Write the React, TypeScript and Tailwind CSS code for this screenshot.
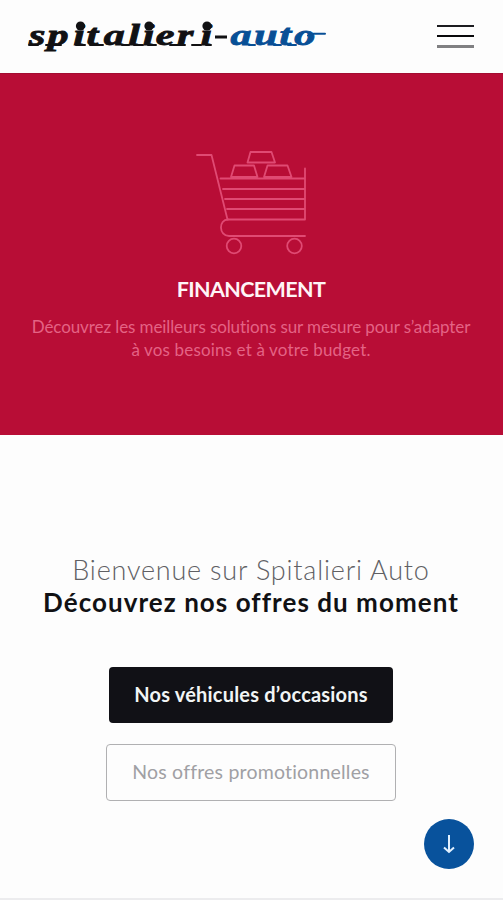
import React from "react";

function Logo() {
  return (
    <svg
      className="block h-[40px] w-[310px]"
      viewBox="18 17 310 40"
      role="img"
      aria-label="spitalieri-auto"
      fontFamily="'Liberation Serif', serif"
      fontSize="29"
      fontWeight="700"
      fontStyle="italic"
      strokeLinecap="round"
    >
      <g fill="#111113" stroke="#111113">
        <text
          transform="scale(1.45 1)"
          strokeWidth="0.8"
          y="45"
          x="20 32.700 50.500 59.700 71.500 88.500 98.500 107.500 122 138.300"
        >
          spitalieri
        </text>
        <path d="M29 45h9M46 45h15M76 45h9M90 45h13M122 45h7M134 45h9M148 45h8M170 45h15M192 45h9M206 45h5" strokeWidth="2" />
        <path d="M215 37h12" strokeWidth="3" strokeLinecap="butt" />
        <g stroke="none">
          <circle cx="80.500" cy="26" r="4.600" />
          <circle cx="149" cy="26" r="4.600" />
          <circle cx="207" cy="26" r="4.600" />
        </g>
      </g>
      <g fill="#084f96" stroke="#084f96">
        <text transform="scale(1.45 1)" strokeWidth="0.8" y="45" x="159 175.300 192.800 203">
          auto
        </text>
        <path d="M249 45h6M274 45h7M288 45h8M308 35.500q3-1.700 6-1.700h11" fill="none" strokeWidth="2" />
      </g>
    </svg>
  );
}

function Cart() {
  return (
    <svg
      className="block h-[110px] w-[116px]"
      viewBox="193 147 116 110"
      fill="none"
      stroke="#e04a73"
      strokeWidth="1.8"
      strokeLinecap="round"
      strokeLinejoin="round"
    >
      <path d="M197 155h14.500l16 64.500h77.500v-51M220.500 178.500h84M223 189h81M225 199h79M227 209h77" />
      <path d="M228 219.500c-9.500 0-9.500 16.500 1 16.500h76" />
      <path d="M247.500 162.500l3-10.500h21l3.500 10.500zM231 177l3.500-11.500h19.500l3.500 11.500zM264 177l3.500-11.500h20l4 11.500z" />
      <circle cx="234" cy="246" r="7.300" />
      <circle cx="294.500" cy="246" r="7.300" />
    </svg>
  );
}

export default function App() {
  return (
    <div className="relative flex h-[900px] w-full flex-col overflow-hidden border-b-2 border-[#ececee] bg-[#fdfdfd] font-[Lato,sans-serif]">
      <header className="flex h-[73px] shrink-0 items-start justify-between pr-[29px] pl-[18px]">
        <div className="pt-[17px]">
          <Logo />
        </div>
        <button aria-label="Menu" className="mt-[25px] flex w-[37px] flex-col gap-2">
          <span className="h-0.5 w-full bg-[#1c1c20]" />
          <span className="h-0.5 w-full bg-[#08080a]" />
          <span className="h-[3px] w-full bg-[#808082]" />
        </button>
      </header>

      <section className="flex h-[362px] shrink-0 flex-col items-center border-t border-[#a30d31] bg-[#b80d36] pt-[73px] pr-px">
        <Cart />
        <h2 className="mt-[17px] text-[21.5px] leading-[30px] font-bold tracking-[-0.6px] text-[#fff4f7]">
          FINANCEMENT
        </h2>
        <p className="mt-[11px] text-center text-[17px] leading-[23px] whitespace-nowrap text-[#e46385]">
          <span className="block tracking-[-0.1px]">Découvrez les meilleurs solutions sur mesure pour s’adapter</span>
          <span className="block tracking-[0.15px]">à vos besoins et à votre budget.</span>
        </p>
      </section>

      <main className="flex flex-col items-center pt-[119px] pr-px">
        <h1 className="text-center whitespace-nowrap">
          <span className="block text-[27px] leading-8 font-light tracking-[0.8px] text-[#606064]">
            Bienvenue sur Spitalieri Auto
          </span>
          <span className="block text-[26px] leading-8 font-bold tracking-[1.05px] text-[#111114]">
            Découvrez nos offres du moment
          </span>
        </h1>
        <button className="mt-[49px] h-14 w-[284px] rounded-[4px] bg-[#111116] pb-0.5 text-[20px] font-bold tracking-[0.2px] whitespace-nowrap text-[#f2f5f5]">
          Nos véhicules d’occasions
        </button>
        <button className="mt-[21px] h-[57px] w-[290px] rounded-[4px] border border-[#b0b0b2] pb-0.5 text-[19.5px] tracking-[0.2px] whitespace-nowrap text-[#a0a0a4]">
          Nos offres promotionnelles
        </button>
      </main>

      <button
        aria-label="Descendre"
        className="absolute top-[819px] left-[424px] flex size-[50px] items-center justify-center rounded-full bg-[#08529c]"
      >
        <svg className="h-5 w-3" viewBox="0 0 12 20" fill="none" stroke="#e2f1ff" strokeWidth="2">
          <path d="M6 1v17M1 13.500L6 18l5-4.500" />
        </svg>
      </button>
    </div>
  );
}
